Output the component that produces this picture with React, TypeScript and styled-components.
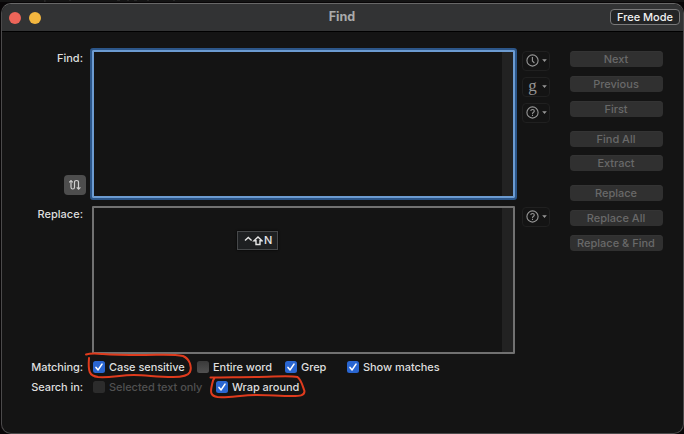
import React from 'react';
import styled, { createGlobalStyle } from 'styled-components';

const GlobalStyle = createGlobalStyle`
  * { box-sizing: border-box; }
  body { margin: 0; background: #080607; overflow: hidden; }
`;

const Screen = styled.div`
  position: relative;
  width: 684px;
  height: 434px;
  padding: 3px 0 0 1px;
  background: #080607;
  font-family: Inter, 'Liberation Sans', sans-serif;
  font-size: 11px;
  font-weight: 500;
  color: #dedede;
`;

const Backdrop = styled.svg`
  position: absolute;
  left: 0;
  top: 0;
`;

const Window = styled.main`
  position: relative;
  width: 683px;
  height: 431px;
  border: 1px solid #4b4a4b;
  border-top-color: #686868;
  border-radius: 10px;
  background: #141414;
  overflow: hidden;
`;

const TitleBar = styled.header`
  height: 28px;
  display: grid;
  grid-template-columns: 1fr auto 1fr;
  align-items: center;
  padding: 0 3px 0 7px;
  background: #323334;
  border-bottom: 1px solid #000;
`;

const Lights = styled.div`
  display: flex;
  gap: 8px;
`;

const Light = styled.span<{ $color: string }>`
  width: 12px;
  height: 12px;
  border-radius: 50%;
  background: ${(p) => p.$color};
`;

const Title = styled.h1`
  margin: 0 5px 2px 0;
  font-size: 12.6px;
  line-height: 16px;
  font-weight: 700;
  color: #aaabab;
`;

const ModeButton = styled.button`
  justify-self: end;
  width: 70px;
  height: 16px;
  margin-bottom: 1px;
  padding: 0;
  border: 1px solid #79797a;
  border-radius: 4px;
  background: #232425;
  color: #f1f1f1;
  font: 500 11px/14px Inter, sans-serif;
  letter-spacing: 0;
`;

const Body = styled.div`
  display: grid;
  grid-template-columns: 81px 427px 28px 93px;
  column-gap: 0;
  padding: 16px 0 0;
`;

const LabelColumn = styled.div`
  display: flex;
  flex-direction: column;
  align-items: flex-end;
  padding-top: 3px;
`;

const Label = styled.label`
  line-height: 14px;
  text-align: right;
`;

const SwapButton = styled.button`
  width: 22px;
  height: 20px;
  margin: 110px -3px 12px 0;
  padding: 0;
  border: 0;
  border-radius: 4px;
  background: #4d4d4d;
  display: grid;
  place-items: center;
`;

const Fields = styled.div`
  display: flex;
  flex-direction: column;
  align-items: center;
  gap: 6px;
  margin-left: 7px;
  width: 427px;
`;

const Field = styled.div<{ $focused?: boolean }>`
  width: ${(p) => (p.$focused ? 427 : 423)}px;
  height: ${(p) => (p.$focused ? 152 : 148)}px;
  display: flex;
  justify-content: flex-end;
  border: 2px solid ${(p) => (p.$focused ? '#2c5689' : '#717171')};
  border-radius: ${(p) => (p.$focused ? 3 : 1)}px;
  background: #141414;
`;

const FocusInner = styled.div`
  flex: 1;
  display: flex;
  justify-content: flex-end;
  border: 2px solid #6c9bd1;
  border-radius: 1px;
`;

const ScrollTrack = styled.div`
  width: 11px;
  background: #222;
`;

const Menus = styled.div`
  display: flex;
  flex-direction: column;
  gap: 6px;
  margin-left: 12px;
  padding-top: 3px;
`;

const MenuButton = styled.button<{ $separate?: boolean }>`
  width: 28px;
  height: 20px;
  margin: ${(p) => (p.$separate ? '78px' : '0')} 0 0;
  padding: 0 2px 1px 3px;
  display: flex;
  align-items: center;
  justify-content: space-between;
  border: 1px solid #202020;
  border-radius: 4px;
  background: #141414;
  color: #969696;
`;

const GrepGlyph = styled.span`
  width: 13px;
  margin-top: -2px;
  text-align: center;
  font: 400 17px/16px 'Liberation Serif', serif;
`;

const Actions = styled.div`
  display: flex;
  flex-direction: column;
  margin-left: 32px;
  padding-top: 3px;
  width: 93px;
`;

const Action = styled.button<{ $gap?: number }>`
  height: 16px;
  flex: none;
  margin: ${(p) => p.$gap ?? 9}px 0 0;
  padding: 0 1px 0 0;
  border: 0;
  border-radius: 4px;
  background: #303030;
  box-shadow: inset 0 1px #343434;
  color: #696969;
  font: 500 11px/16px Inter, sans-serif;
  letter-spacing: 0;
`;

const Options = styled.div`
  display: flex;
  flex-direction: column;
  gap: 6px;
  padding-top: 6px;
`;

const OptionRow = styled.div`
  height: 14px;
  display: flex;
  align-items: center;
`;

const RowLabel = styled(Label)`
  width: 81px;
  margin-right: 10px;
  letter-spacing: -0.08px;
`;

const Option = styled.label<{ $width: number; $dim?: boolean }>`
  width: ${(p) => p.$width}px;
  display: flex;
  align-items: center;
  gap: 4px;
  line-height: 14px;
  letter-spacing: -0.05px;
  white-space: nowrap;
  color: ${(p) => (p.$dim ? '#505050' : '#dedede')};
`;

const Box = styled.span<{ $on?: boolean; $dim?: boolean }>`
  width: 12px;
  height: 12px;
  flex: none;
  display: grid;
  place-items: center;
  border-radius: 2.5px;
  background: ${(p) => (p.$on ? '#2a66d1' : p.$dim ? '#2c2c2c' : 'linear-gradient(#3a3a3a, #515151)')};
`;

const KeyHint = styled.div`
  position: absolute;
  left: 237px;
  top: 231px;
  width: 41px;
  height: 19px;
  display: flex;
  align-items: center;
  gap: 1px;
  padding: 0 0 1px 6px;
  border: 1px solid #46484a;
  background: #1e2022;
  box-shadow: 0 0 2px #000;
  color: #e6e6e6;
  font-size: 11px;
`;

const Markup = styled.svg`
  position: absolute;
  left: 0;
  top: 0;
  pointer-events: none;
`;

const Caret = () => (
  <svg width="5" height="3" viewBox="0 0 5 3"><path d="M.2 .2h4.6L2.500 2.900z" fill="currentColor" /></svg>
);

const ClockIcon = () => (
  <svg width="13" height="13" viewBox="0 0 13 13" fill="none" stroke="currentColor" strokeWidth="1.1">
    <circle cx="6.5" cy="6.5" r="5.6" />
    <path d="M6.4 3v4l2 2" />
  </svg>
);

const HelpIcon = () => (
  <svg width="13" height="13" viewBox="0 0 13 13" fill="none" stroke="currentColor" strokeWidth="1.1">
    <circle cx="6.5" cy="6.5" r="5.6" />
    <path d="M4.8 5.1c0-2.200 3.500-2.100 3.500-.1C8.300 6.400 6.500 6.200 6.500 8M6.500 8.800v1.100" />
  </svg>
);

const SwapIcon = () => (
  <svg width="14" height="12" viewBox="0 0 14 12" fill="none" stroke="#d0d0d0" strokeWidth="1.2">
    <path d="M3 2v6.200c0 2.400 3.500 2.400 3.500 0V3.300c0-2.400 4-2.400 4 0v6.500" />
    <path d="M1.200 3.300 3 1.500l1.800 1.800M8.800 8.400l1.800 1.800 1.800-1.800" />
  </svg>
);

const Check = ({ label, width, on, dim }: { label: string; width: number; on?: boolean; dim?: boolean }) => (
  <Option $width={width} $dim={dim}>
    <Box $on={on} $dim={dim}>
      {on && (
        <svg width="12" height="12" viewBox="0 0 12 12" fill="none" stroke="#fff" strokeWidth="1.6" strokeLinecap="round" strokeLinejoin="round">
          <path d="m3 6.400 2.100 2.500L9 3.100" />
        </svg>
      )}
    </Box>
    {label}
  </Option>
);

const actions: [string, number][] = [
  ['Next', 0], ['Previous', 9], ['First', 9], ['Find All', 14],
  ['Extract', 8], ['Replace', 14], ['Replace All', 9], ['Replace & Find', 9],
];

export default function App() {
  return (
    <>
      <GlobalStyle />
      <Screen>
        <Backdrop width="684" height="3">
          <path d="M0 0h45v2H0zM46 0h638v2H46z" fill="#141414" />
          <path d="M45 0v2M70 0v1M117 0h3M127 0h2M134 0h3M147 0h2M173 0h2" stroke="#383838" />
        </Backdrop>
        <Window>
          <TitleBar>
            <Lights><Light $color="#ed6559" /><Light $color="#f4b73f" /></Lights>
            <Title>Find</Title>
            <ModeButton>Free Mode</ModeButton>
          </TitleBar>
          <Body>
            <LabelColumn>
              <Label>Find:</Label>
              <SwapButton aria-label="Swap"><SwapIcon /></SwapButton>
              <Label>Replace:</Label>
            </LabelColumn>
            <Fields>
              <Field $focused><FocusInner><ScrollTrack /></FocusInner></Field>
              <Field><ScrollTrack /></Field>
            </Fields>
            <Menus>
              <MenuButton><ClockIcon /><Caret /></MenuButton>
              <MenuButton><GrepGlyph>g</GrepGlyph><Caret /></MenuButton>
              <MenuButton><HelpIcon /><Caret /></MenuButton>
              <MenuButton $separate><HelpIcon /><Caret /></MenuButton>
            </Menus>
            <Actions>
              {actions.map(([name, gap]) => <Action key={name} $gap={gap}>{name}</Action>)}
            </Actions>
          </Body>
          <Options>
            <OptionRow>
              <RowLabel>Matching:</RowLabel>
              <Check label="Case sensitive" width={104} on />
              <Check label="Entire word" width={88} />
              <Check label="Grep" width={62} on />
              <Check label="Show matches" width={100} on />
            </OptionRow>
            <OptionRow>
              <RowLabel>Search in:</RowLabel>
              <Check label="Selected text only" width={123} dim />
              <Check label="Wrap around" width={90} on />
            </OptionRow>
          </Options>
        </Window>
        <KeyHint>
          <svg width="19" height="11" viewBox="0 0 19 11" fill="none" stroke="currentColor" strokeWidth="1.400">
            <path d="m1 5.500 3.300-3 3.300 3M10 5.700 14 2l4 3.700h-2v3.800h-4V5.700z" />
          </svg>
          N
        </KeyHint>
        <Markup width="684" height="434" fill="none" stroke="#df3b1d" strokeWidth="2" strokeLinecap="round" strokeLinejoin="round">
          <path d="M86 354.500c5-1.500 10-1 17-.5 12 1 22 1 40 1 18 0 31-1 40 1 7 3 9 11 7 16-2 4-9 5-17 5-17 0-26-2-39-2-14 0-24 3-36 2-9-1-10-6-9-19" />
          <path d="M210.500 377.500c16 0 29-.5 45-.5 17 0 33-2 42 0 4 3 5 9 7 14 0 5-5 5-12 5-13 0-23-1-36-1-15 0-28 3-39 2-7-1-7-5-6-10 1-4 1-7 3-9" />
        </Markup>
      </Screen>
    </>
  );
}
